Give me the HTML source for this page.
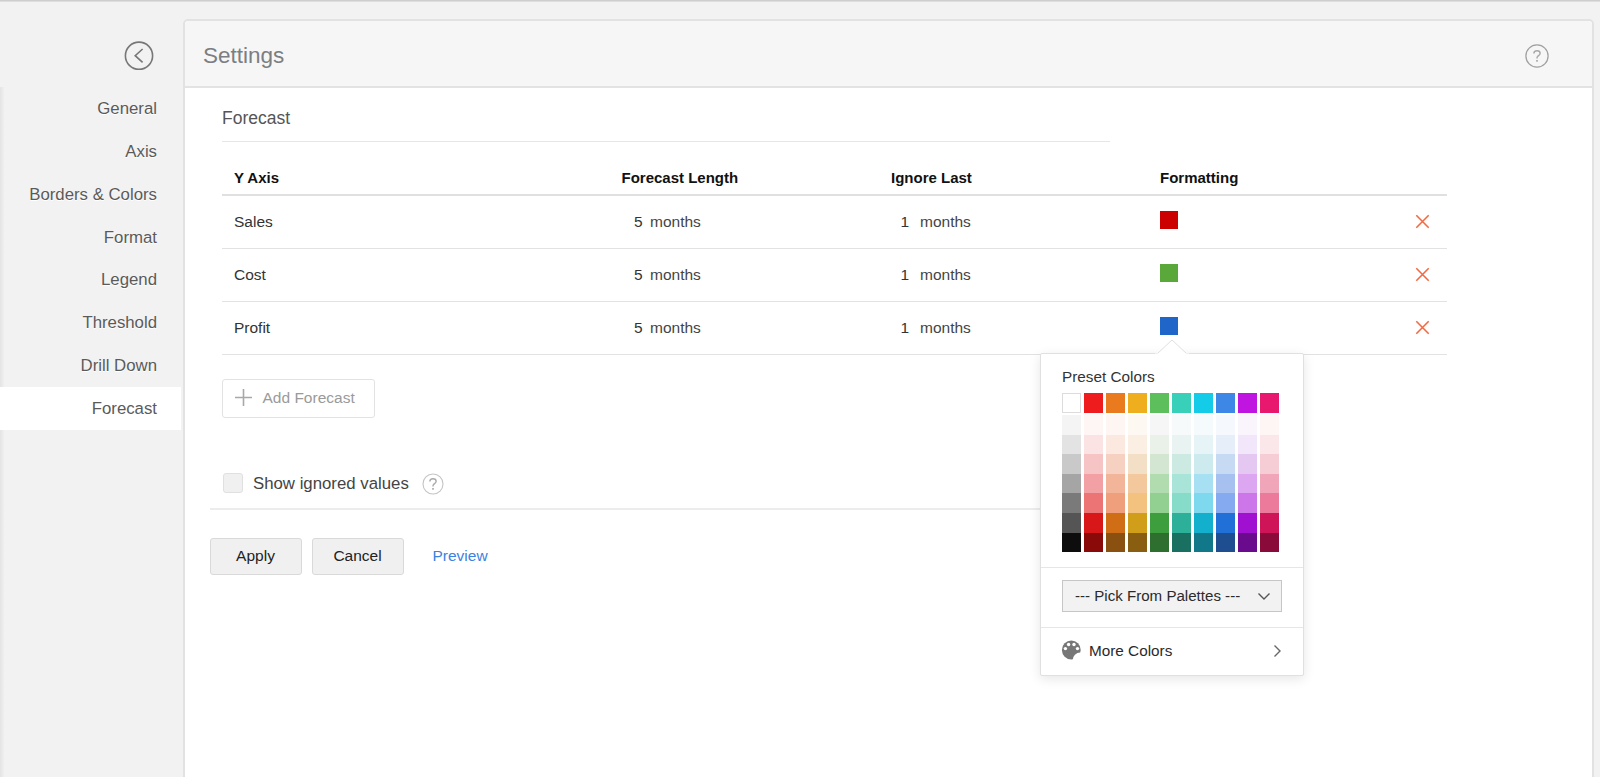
<!DOCTYPE html>
<html><head><meta charset="utf-8"><title>Settings</title>
<style>
html,body{margin:0;padding:0;width:1600px;height:777px;overflow:hidden;background:#f2f2f2;font-family:"Liberation Sans", sans-serif;}
.a{position:absolute;box-sizing:content-box}
.t{position:absolute;white-space:pre}
</style></head><body>
<div class="a" style="left:0px;top:0px;width:1600px;height:2px;background:linear-gradient(#c6c6c6,#e6e6e6)"></div>
<div class="a" style="left:0px;top:87px;width:4px;height:690px;background:linear-gradient(90deg,#e4e4e4,#efefef)"></div>
<div class="a" style="left:0px;top:387px;width:181px;height:43px;background:#ffffff"></div>
<svg class="a" style="left:124px;top:41px" width="30" height="30" viewBox="0 0 30 30"><circle cx="15" cy="14.7" r="13.6" fill="none" stroke="#777" stroke-width="1.6"/><polyline points="18.6,8 11.2,14.7 18.6,21.4" fill="none" stroke="#777" stroke-width="1.6"/></svg>
<div class="t" style="right:1443px;top:100.98px;font-size:16.8px;line-height:16.8px;color:#5a5a5a;font-weight:400;text-shadow:0 1px 0 #fff">General</div>
<div class="t" style="right:1443px;top:143.83px;font-size:16.8px;line-height:16.8px;color:#5a5a5a;font-weight:400;text-shadow:0 1px 0 #fff">Axis</div>
<div class="t" style="right:1443px;top:186.68px;font-size:16.8px;line-height:16.8px;color:#5a5a5a;font-weight:400;text-shadow:0 1px 0 #fff">Borders &amp; Colors</div>
<div class="t" style="right:1443px;top:229.53px;font-size:16.8px;line-height:16.8px;color:#5a5a5a;font-weight:400;text-shadow:0 1px 0 #fff">Format</div>
<div class="t" style="right:1443px;top:272.38px;font-size:16.8px;line-height:16.8px;color:#5a5a5a;font-weight:400;text-shadow:0 1px 0 #fff">Legend</div>
<div class="t" style="right:1443px;top:315.23px;font-size:16.8px;line-height:16.8px;color:#5a5a5a;font-weight:400;text-shadow:0 1px 0 #fff">Threshold</div>
<div class="t" style="right:1443px;top:358.08px;font-size:16.8px;line-height:16.8px;color:#5a5a5a;font-weight:400;text-shadow:0 1px 0 #fff">Drill Down</div>
<div class="t" style="right:1443px;top:400.93px;font-size:16.8px;line-height:16.8px;color:#5a5a5a;font-weight:400;text-shadow:0 1px 0 #fff">Forecast</div>
<div class="a" style="left:183px;top:19px;width:1407px;height:800px;border:2px solid #e2e2e2;border-radius:5px;background:#fff;box-sizing:content-box"></div>
<div class="a" style="left:185px;top:21px;width:1407px;height:65px;background:#f6f6f6;border-top-left-radius:4px;border-top-right-radius:4px"></div>
<div class="a" style="left:185px;top:86px;width:1407px;height:2px;background:#e3e3e3"></div>
<div class="t" style="left:203px;top:45.45px;font-size:22.5px;line-height:22.5px;color:#7b7e82;font-weight:400;">Settings</div>
<svg class="a" style="left:1522px;top:40.5px" width="30" height="30" viewBox="0 0 30 30"><circle cx="15" cy="15" r="11.1" fill="none" stroke="#a0a0a0" stroke-width="1.25"/><path d="M11.865 12.530000000000001 C11.865 10.63 13.29 9.68 15 9.68 C16.805 9.68 18.134999999999998 10.725000000000001 18.134999999999998 12.34 C18.134999999999998 14.05 16.52 14.62 15.57 15.475 C15.095 15.95 15 16.52 15 17.47" fill="none" stroke="#a8a8a8" stroke-width="1.45"/><rect x="14.145" y="18.99" width="1.71" height="1.71" fill="#a8a8a8"/></svg>
<div class="t" style="left:222px;top:109.79px;font-size:17.5px;line-height:17.5px;color:#555;font-weight:400;">Forecast</div>
<div class="a" style="left:222px;top:141px;width:888px;height:1px;background:#e6e6e6"></div>
<div class="t" style="left:234px;top:169.70px;font-size:15px;line-height:15px;color:#111;font-weight:700;">Y Axis</div>
<div class="t" style="left:621.5px;top:169.70px;font-size:15px;line-height:15px;color:#111;font-weight:700;">Forecast Length</div>
<div class="t" style="left:891px;top:169.70px;font-size:15px;line-height:15px;color:#111;font-weight:700;">Ignore Last</div>
<div class="t" style="left:1160px;top:169.70px;font-size:15px;line-height:15px;color:#111;font-weight:700;">Formatting</div>
<div class="a" style="left:222px;top:194px;width:1225px;height:2px;background:#e0e0e0"></div>
<div class="t" style="left:234px;top:214.38px;font-size:15.5px;line-height:15.5px;color:#333;font-weight:400;">Sales</div>
<div class="t" style="left:634px;top:214.38px;font-size:15.5px;line-height:15.5px;color:#333;font-weight:400;">5</div>
<div class="t" style="left:650px;top:214.38px;font-size:15.5px;line-height:15.5px;color:#444;font-weight:400;">months</div>
<div class="t" style="left:900.5px;top:214.38px;font-size:15.5px;line-height:15.5px;color:#333;font-weight:400;">1</div>
<div class="t" style="left:920px;top:214.38px;font-size:15.5px;line-height:15.5px;color:#444;font-weight:400;">months</div>
<div class="a" style="left:1160px;top:211px;width:18px;height:18px;background:#cc0000"></div>
<svg class="a" style="left:1414px;top:212.5px" width="17" height="17" viewBox="0 0 17 17"><path d="M2.3 2.3 L14.7 14.7 M14.7 2.3 L2.3 14.7" stroke="#f06a43" stroke-width="1.6" fill="none"/></svg>
<div class="a" style="left:222px;top:248px;width:1225px;height:1px;background:#e2e2e2"></div>
<div class="t" style="left:234px;top:266.98px;font-size:15.5px;line-height:15.5px;color:#333;font-weight:400;">Cost</div>
<div class="t" style="left:634px;top:266.98px;font-size:15.5px;line-height:15.5px;color:#333;font-weight:400;">5</div>
<div class="t" style="left:650px;top:266.98px;font-size:15.5px;line-height:15.5px;color:#444;font-weight:400;">months</div>
<div class="t" style="left:900.5px;top:266.98px;font-size:15.5px;line-height:15.5px;color:#333;font-weight:400;">1</div>
<div class="t" style="left:920px;top:266.98px;font-size:15.5px;line-height:15.5px;color:#444;font-weight:400;">months</div>
<div class="a" style="left:1160px;top:264px;width:18px;height:18px;background:#5aa83a"></div>
<svg class="a" style="left:1414px;top:265.5px" width="17" height="17" viewBox="0 0 17 17"><path d="M2.3 2.3 L14.7 14.7 M14.7 2.3 L2.3 14.7" stroke="#f06a43" stroke-width="1.6" fill="none"/></svg>
<div class="a" style="left:222px;top:301px;width:1225px;height:1px;background:#e2e2e2"></div>
<div class="t" style="left:234px;top:319.58px;font-size:15.5px;line-height:15.5px;color:#333;font-weight:400;">Profit</div>
<div class="t" style="left:634px;top:319.58px;font-size:15.5px;line-height:15.5px;color:#333;font-weight:400;">5</div>
<div class="t" style="left:650px;top:319.58px;font-size:15.5px;line-height:15.5px;color:#444;font-weight:400;">months</div>
<div class="t" style="left:900.5px;top:319.58px;font-size:15.5px;line-height:15.5px;color:#333;font-weight:400;">1</div>
<div class="t" style="left:920px;top:319.58px;font-size:15.5px;line-height:15.5px;color:#444;font-weight:400;">months</div>
<div class="a" style="left:1160px;top:317px;width:18px;height:18px;background:#2065c8"></div>
<svg class="a" style="left:1414px;top:318.5px" width="17" height="17" viewBox="0 0 17 17"><path d="M2.3 2.3 L14.7 14.7 M14.7 2.3 L2.3 14.7" stroke="#f06a43" stroke-width="1.6" fill="none"/></svg>
<div class="a" style="left:222px;top:354px;width:1225px;height:1px;background:#e2e2e2"></div>
<div class="a" style="left:222px;top:379px;width:151px;height:37px;border:1px solid #e2e2e2;border-radius:3px;background:#fff"></div>
<svg class="a" style="left:234px;top:388px" width="19" height="19" viewBox="0 0 19 19"><path d="M9.5 1 V18 M1 9.5 H18" stroke="#a8a8a8" stroke-width="1.6" fill="none"/></svg>
<div class="t" style="left:262.5px;top:389.88px;font-size:15.5px;line-height:15.5px;color:#9a9a9a;font-weight:400;">Add Forecast</div>
<div class="a" style="left:223px;top:473px;width:18px;height:18px;border:1px solid #e0e0e0;border-radius:3px;background:#f0f0f0"></div>
<div class="t" style="left:253px;top:476.18px;font-size:16.8px;line-height:16.8px;color:#444;font-weight:400;">Show ignored values</div>
<svg class="a" style="left:418px;top:469px" width="30" height="30" viewBox="0 0 30 30"><circle cx="15" cy="15" r="10.0" fill="none" stroke="#c4c4c4" stroke-width="1.1"/><path d="M11.865 12.530000000000001 C11.865 10.63 13.29 9.68 15 9.68 C16.805 9.68 18.134999999999998 10.725000000000001 18.134999999999998 12.34 C18.134999999999998 14.05 16.52 14.62 15.57 15.475 C15.095 15.95 15 16.52 15 17.47" fill="none" stroke="#ababab" stroke-width="1.45"/><rect x="14.145" y="18.99" width="1.71" height="1.71" fill="#ababab"/></svg>
<div class="a" style="left:210px;top:508px;width:880px;height:2px;background:#ececec"></div>
<div class="a" style="left:210px;top:538px;width:90px;height:35px;border:1px solid #d9d9d9;border-radius:3px;background:#f0f0f0"></div>
<div class="t" style="left:-44.5px;width:600px;text-align:center;top:548.18px;font-size:15.5px;line-height:15.5px;color:#222;font-weight:400;">Apply</div>
<div class="a" style="left:312px;top:538px;width:90px;height:35px;border:1px solid #d9d9d9;border-radius:3px;background:#f0f0f0"></div>
<div class="t" style="left:57.5px;width:600px;text-align:center;top:548.18px;font-size:15.5px;line-height:15.5px;color:#222;font-weight:400;">Cancel</div>
<div class="t" style="left:432.5px;top:548.18px;font-size:15.5px;line-height:15.5px;color:#3d82e0;font-weight:400;">Preview</div>
<div class="a" style="left:1040px;top:353px;width:262px;height:321px;border:1px solid #e0e0e0;border-radius:2px;background:#fff;box-shadow:0 3px 12px rgba(0,0,0,0.10)"></div>
<svg class="a" style="left:1155px;top:338px" width="34" height="17" viewBox="0 0 34 17"><path d="M2 16 L17 2 L32 16" fill="#fff" stroke="#e0e0e0" stroke-width="1"/><rect x="0" y="15.5" width="34" height="2" fill="#fff"/></svg>
<div class="t" style="left:1062px;top:368.55px;font-size:15.3px;line-height:15.3px;color:#333;font-weight:400;">Preset Colors</div>
<div class="a" style="left:1062px;top:393px;width:17px;height:18px;background:#fff;border:1px solid #dcdcdc"></div>
<div class="a" style="left:1084px;top:393px;width:19px;height:20px;background:#ee1c1c"></div>
<div class="a" style="left:1106px;top:393px;width:19px;height:20px;background:#ea7a1e"></div>
<div class="a" style="left:1128px;top:393px;width:19px;height:20px;background:#eeae1e"></div>
<div class="a" style="left:1150px;top:393px;width:19px;height:20px;background:#5cbf5c"></div>
<div class="a" style="left:1172px;top:393px;width:19px;height:20px;background:#38d0b8"></div>
<div class="a" style="left:1194px;top:393px;width:19px;height:20px;background:#14cbe8"></div>
<div class="a" style="left:1216px;top:393px;width:19px;height:20px;background:#3d88e6"></div>
<div class="a" style="left:1238px;top:393px;width:19px;height:20px;background:#c014e0"></div>
<div class="a" style="left:1260px;top:393px;width:19px;height:20px;background:#e8186e"></div>
<div class="a" style="left:1062px;top:415px;width:19px;height:20px;background:#f4f4f4"></div>
<div class="a" style="left:1084px;top:415px;width:19px;height:20px;background:#fef5f5"></div>
<div class="a" style="left:1106px;top:415px;width:19px;height:20px;background:#fef6f3"></div>
<div class="a" style="left:1128px;top:415px;width:19px;height:20px;background:#fef8f3"></div>
<div class="a" style="left:1150px;top:415px;width:19px;height:20px;background:#f5f6f5"></div>
<div class="a" style="left:1172px;top:415px;width:19px;height:20px;background:#f6fafa"></div>
<div class="a" style="left:1194px;top:415px;width:19px;height:20px;background:#f5fafc"></div>
<div class="a" style="left:1216px;top:415px;width:19px;height:20px;background:#f5f8fd"></div>
<div class="a" style="left:1238px;top:415px;width:19px;height:20px;background:#faf4fd"></div>
<div class="a" style="left:1260px;top:415px;width:19px;height:20px;background:#fef6f4"></div>
<div class="a" style="left:1062px;top:435px;width:19px;height:19px;background:#e3e3e3"></div>
<div class="a" style="left:1084px;top:435px;width:19px;height:19px;background:#fbe3e3"></div>
<div class="a" style="left:1106px;top:435px;width:19px;height:19px;background:#fbe8df"></div>
<div class="a" style="left:1128px;top:435px;width:19px;height:19px;background:#fbeee3"></div>
<div class="a" style="left:1150px;top:435px;width:19px;height:19px;background:#e9f1e9"></div>
<div class="a" style="left:1172px;top:435px;width:19px;height:19px;background:#e8f3f2"></div>
<div class="a" style="left:1194px;top:435px;width:19px;height:19px;background:#e6f4f8"></div>
<div class="a" style="left:1216px;top:435px;width:19px;height:19px;background:#e6eef9"></div>
<div class="a" style="left:1238px;top:435px;width:19px;height:19px;background:#f2e6fa"></div>
<div class="a" style="left:1260px;top:435px;width:19px;height:19px;background:#fbe6ea"></div>
<div class="a" style="left:1062px;top:454px;width:19px;height:20px;background:#c9c9c9"></div>
<div class="a" style="left:1084px;top:454px;width:19px;height:20px;background:#f7c4c6"></div>
<div class="a" style="left:1106px;top:454px;width:19px;height:20px;background:#f6d0c0"></div>
<div class="a" style="left:1128px;top:454px;width:19px;height:20px;background:#f3dfc6"></div>
<div class="a" style="left:1150px;top:454px;width:19px;height:20px;background:#d2e6d2"></div>
<div class="a" style="left:1172px;top:454px;width:19px;height:20px;background:#cce9e2"></div>
<div class="a" style="left:1194px;top:454px;width:19px;height:20px;background:#cdebee"></div>
<div class="a" style="left:1216px;top:454px;width:19px;height:20px;background:#c6daf4"></div>
<div class="a" style="left:1238px;top:454px;width:19px;height:20px;background:#e5c8f2"></div>
<div class="a" style="left:1260px;top:454px;width:19px;height:20px;background:#f7cdd5"></div>
<div class="a" style="left:1062px;top:474px;width:19px;height:19px;background:#a5a5a5"></div>
<div class="a" style="left:1084px;top:474px;width:19px;height:19px;background:#f2a0a4"></div>
<div class="a" style="left:1106px;top:474px;width:19px;height:19px;background:#f2b599"></div>
<div class="a" style="left:1128px;top:474px;width:19px;height:19px;background:#f2c89c"></div>
<div class="a" style="left:1150px;top:474px;width:19px;height:19px;background:#b0dcb0"></div>
<div class="a" style="left:1172px;top:474px;width:19px;height:19px;background:#a8e4d7"></div>
<div class="a" style="left:1194px;top:474px;width:19px;height:19px;background:#a6e0f2"></div>
<div class="a" style="left:1216px;top:474px;width:19px;height:19px;background:#a6c0f0"></div>
<div class="a" style="left:1238px;top:474px;width:19px;height:19px;background:#dca6f0"></div>
<div class="a" style="left:1260px;top:474px;width:19px;height:19px;background:#f0a6b8"></div>
<div class="a" style="left:1062px;top:493px;width:19px;height:20px;background:#7a7a7a"></div>
<div class="a" style="left:1084px;top:493px;width:19px;height:20px;background:#ec7474"></div>
<div class="a" style="left:1106px;top:493px;width:19px;height:20px;background:#ef9f7c"></div>
<div class="a" style="left:1128px;top:493px;width:19px;height:20px;background:#f2c27e"></div>
<div class="a" style="left:1150px;top:493px;width:19px;height:20px;background:#92d092"></div>
<div class="a" style="left:1172px;top:493px;width:19px;height:20px;background:#86dcc8"></div>
<div class="a" style="left:1194px;top:493px;width:19px;height:20px;background:#7ed8ee"></div>
<div class="a" style="left:1216px;top:493px;width:19px;height:20px;background:#86aaf0"></div>
<div class="a" style="left:1238px;top:493px;width:19px;height:20px;background:#cc76ea"></div>
<div class="a" style="left:1260px;top:493px;width:19px;height:20px;background:#ec7a9a"></div>
<div class="a" style="left:1062px;top:513px;width:19px;height:20px;background:#555555"></div>
<div class="a" style="left:1084px;top:513px;width:19px;height:20px;background:#d81818"></div>
<div class="a" style="left:1106px;top:513px;width:19px;height:20px;background:#cf6e14"></div>
<div class="a" style="left:1128px;top:513px;width:19px;height:20px;background:#d19e1a"></div>
<div class="a" style="left:1150px;top:513px;width:19px;height:20px;background:#3c9e3c"></div>
<div class="a" style="left:1172px;top:513px;width:19px;height:20px;background:#2cb09a"></div>
<div class="a" style="left:1194px;top:513px;width:19px;height:20px;background:#12b0cc"></div>
<div class="a" style="left:1216px;top:513px;width:19px;height:20px;background:#2070d8"></div>
<div class="a" style="left:1238px;top:513px;width:19px;height:20px;background:#a010d0"></div>
<div class="a" style="left:1260px;top:513px;width:19px;height:20px;background:#d01458"></div>
<div class="a" style="left:1062px;top:533px;width:19px;height:19px;background:#0d0d0d"></div>
<div class="a" style="left:1084px;top:533px;width:19px;height:19px;background:#8a0a0a"></div>
<div class="a" style="left:1106px;top:533px;width:19px;height:19px;background:#8a5010"></div>
<div class="a" style="left:1128px;top:533px;width:19px;height:19px;background:#8a5e10"></div>
<div class="a" style="left:1150px;top:533px;width:19px;height:19px;background:#2e6e2e"></div>
<div class="a" style="left:1172px;top:533px;width:19px;height:19px;background:#1a7060"></div>
<div class="a" style="left:1194px;top:533px;width:19px;height:19px;background:#107888"></div>
<div class="a" style="left:1216px;top:533px;width:19px;height:19px;background:#1e4e90"></div>
<div class="a" style="left:1238px;top:533px;width:19px;height:19px;background:#6a0a8c"></div>
<div class="a" style="left:1260px;top:533px;width:19px;height:19px;background:#8a0a3a"></div>
<div class="a" style="left:1041px;top:567px;width:262px;height:1px;background:#e6e6e6"></div>
<div class="a" style="left:1062px;top:580px;width:218px;height:30px;border:1px solid #c6c6c6;background:#f2f2f2"></div>
<div class="t" style="left:1075px;top:587.62px;font-size:15.1px;line-height:15.1px;color:#2a2a2a;font-weight:400;">--- Pick From Palettes ---</div>
<svg class="a" style="left:1257px;top:591px" width="14" height="10" viewBox="0 0 14 10"><polyline points="1.5,2.5 7,8 12.5,2.5" fill="none" stroke="#555" stroke-width="1.4"/></svg>
<div class="a" style="left:1041px;top:627px;width:262px;height:1px;background:#e6e6e6"></div>
<svg class="a" style="left:1061px;top:640px" width="21" height="21" viewBox="0 0 21 21"><defs><mask id="pm"><rect width="21" height="21" fill="#fff"/><circle cx="19.3" cy="20" r="7.6" fill="#000"/><circle cx="7.6" cy="4.5" r="1.7" fill="#000"/><circle cx="13" cy="4.5" r="1.7" fill="#000"/><circle cx="4.4" cy="8.6" r="1.7" fill="#000"/><circle cx="16.5" cy="8.6" r="1.7" fill="#000"/></mask></defs><circle cx="10.3" cy="10" r="9.4" fill="#777" mask="url(#pm)"/></svg>
<div class="t" style="left:1089px;top:642.95px;font-size:15.3px;line-height:15.3px;color:#2a2a2a;font-weight:400;">More Colors</div>
<svg class="a" style="left:1272px;top:644px" width="10" height="14" viewBox="0 0 10 14"><polyline points="2.5,1.5 8,7 2.5,12.5" fill="none" stroke="#666" stroke-width="1.4"/></svg>

</body></html>
